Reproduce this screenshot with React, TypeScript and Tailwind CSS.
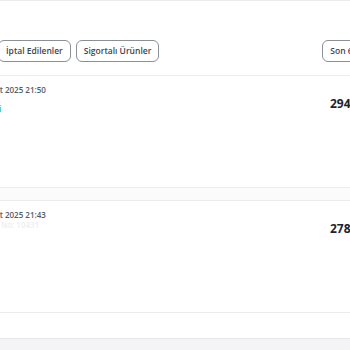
import React from 'react';

interface Order {
  id: string;
  date: string;
  status: string;
  statusClass: string;
  total: string;
}

const orders: Order[] = [
  { id: '1', date: '12 Mart 2025 21:50', status: 'Teslim Edildi', statusClass: 'ml-[-20px] mt-[9px] text-[#10b981]', total: '294,90 TL' },
  { id: '2', date: '12 Mart 2025 21:43', status: 'Sipariş No: 10431', statusClass: 'mt-[0px] text-[#eceef1]', total: '278,40 TL' },
];

const FilterButton: React.FC<{ label: string }> = ({ label }) => (
  <button className="flex h-[22px] shrink-0 items-center rounded-[6px] border border-[#8a8f98] bg-white px-[7px] text-[8.5px] font-semibold text-[#3f4450] whitespace-nowrap">
    {label}
  </button>
);

const OrderCard: React.FC<{ order: Order }> = ({ order }) => (
  <div className="h-[112px] border-b border-[#ececef] bg-white">
    <div className="flex items-start justify-between pt-[9px]">
      <div className="ml-[-27px] flex flex-col">
        <p className="text-[8px] font-semibold leading-[10px] text-[#555a63] whitespace-nowrap">{order.date}</p>
        <p className={`text-[8px] font-semibold leading-[10px] whitespace-nowrap ${order.statusClass}`}>{order.status}</p>
      </div>
      <p className="mr-[-40px] mt-[10px] w-[60px] text-[12px] font-bold text-[#1e2330] whitespace-nowrap">{order.total}</p>
    </div>
  </div>
);

export default function App() {
  return (
    <div className="h-[350px] w-[350px] overflow-hidden bg-white font-['Open_Sans',sans-serif]">
      <div className="border-t border-[#ececef] pt-[39px]">
        <div className="flex items-center justify-between pb-[13px]">
          <div className="ml-[-2px] flex gap-[5px]">
            <FilterButton label="İptal Edilenler" />
            <FilterButton label="Sigortalı Ürünler" />
          </div>
          <div className="mr-[-23px] flex">
            <FilterButton label="Son 6 Ay" />
          </div>
        </div>
      </div>
      <div className="border-t border-[#ececef]">
        <OrderCard order={orders[0]} />
        <div className="h-[12px] bg-[#fbfbfc]" />
        <div className="border-t border-[#ececef]">
          <OrderCard order={orders[1]} />
        </div>
        <div className="h-[25px] bg-white" />
        <div className="h-[20px] border-t border-[#e6e6ea] bg-[#f4f4f6]" />
      </div>
    </div>
  );
}
